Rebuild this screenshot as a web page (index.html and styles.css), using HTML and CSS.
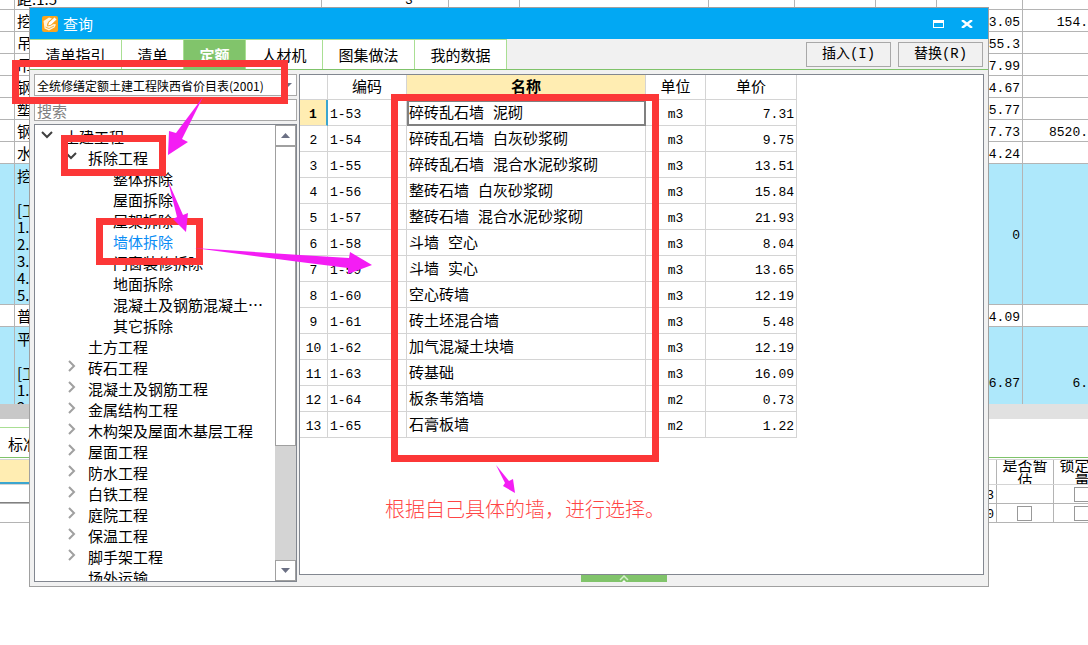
FILE: index.html
```html
<!DOCTYPE html>
<html lang="zh-CN">
<head>
<meta charset="utf-8">
<title>查询</title>
<link rel="stylesheet" href="styles.css">
</head>
<body>
<div class="desktop">
  <main class="sheet">
    <section class="budget">
      <div class="line"><span class="no"></span><span class="desc">距:1:5</span><span class="c1">3</span><span class="c2"></span><span class="c3"></span><span class="c4"></span><span class="c5"></span><span class="c6"></span><span class="c7"></span><span class="qty"></span><span class="sum"></span></div>
      <div class="line"><span class="no"></span><span class="item">挖</span><span class="qty">3.05</span><span class="sum">154.</span></div>
      <div class="line"><span class="no"></span><span class="item">吊</span><span class="qty">55.3</span><span class="sum"></span></div>
      <div class="line"><span class="no"></span><span class="item">吊</span><span class="qty">7.99</span><span class="sum"></span></div>
      <div class="line"><span class="no"></span><span class="item">钢</span><span class="qty">4.67</span><span class="sum"></span></div>
      <div class="line"><span class="no"></span><span class="item">塑</span><span class="qty">5.77</span><span class="sum"></span></div>
      <div class="line"><span class="no"></span><span class="item">钢</span><span class="qty">7.73</span><span class="sum">8520.</span></div>
      <div class="line"><span class="no"></span><span class="item">水</span><span class="qty">4.24</span><span class="sum"></span></div>
      <div class="line group tall"><span class="no"></span><span class="item">挖<br><br>[工<br>1.<br>2.<br>3.<br>4.<br>5.</span><span class="qty">0</span><span class="sum"></span></div>
      <div class="line"><span class="no"></span><span class="item">普</span><span class="qty">4.09</span><span class="sum"></span></div>
      <div class="line group last"><span class="no"></span><span class="item">平<br><br>[工<br>1.<br>2.</span><span class="qty">6.87</span><span class="sum">6.</span></div>
    </section>
    <div class="hscroll"><span class="hscroll-thumb"></span></div>
    <div class="subtabs"><span class="subtab">标准</span></div>
    <section class="detail">
      <div class="drow dhead"><span class="d1"></span><span class="d2"></span><span class="d3">是否暂估</span><span class="d4">锁定数量</span></div>
      <div class="drow first"><span class="d1"></span><span class="d2">3</span><span class="d3"></span><span class="d4"><input type="checkbox" aria-label="锁定数量"></span></div>
      <div class="drow"><span class="d1"></span><span class="d2">0</span><span class="d3"><input type="checkbox" aria-label="是否暂估"></span><span class="d4"><input type="checkbox" aria-label="锁定数量"></span></div>
    </section>
  </main>

  <section class="dialog" role="dialog" aria-labelledby="dlg-title">
    <header class="titlebar">
      <svg class="logo" width="16" height="16" viewBox="0 0 16 16" aria-hidden="true">
        <rect width="16" height="16" rx="2" fill="#fba51c"/>
        <path d="M1.500 5L7 1.500L10 2.500L6 6L5 9.500L8 9.500L12 8L14 8.500L12.500 11.500L7 14.500L2.500 12.500Z" fill="#fff4dc"/>
        <path d="M5.500 10L6.500 6.500L12.500 1L15 3.500L9 9.200Z" fill="#fff" stroke="#f49a12" stroke-width="0.800"/>
        <path d="M3.500 11L7 12.500L12 10" fill="none" stroke="#f8b64a" stroke-width="1"/>
      </svg>
      <h1 class="title" id="dlg-title">查询</h1>
      <button class="winbtn" aria-label="最大化"><svg width="11" height="8" viewBox="0 0 11 8"><path d="M0 0H11V8H0ZM1 3V7H10V3Z" fill="#fff" fill-rule="evenodd"/></svg></button>
      <button class="winbtn" aria-label="关闭"><svg width="12" height="8" viewBox="0 0 12 8"><path d="M1 0L11 8M11 0L1 8" stroke="#fff" stroke-width="2.400"/></svg></button>
    </header>
    <nav class="tabs">
      <button class="tab">清单指引</button><button class="tab short">清单</button><button class="tab short active">定额</button><button class="tab mid">人材机</button><button class="tab">图集做法</button><button class="tab">我的数据</button>
      <div class="actions"><button class="action">插入(I)</button><button class="action">替换(R)</button></div>
    </nav>
    <div class="body">
      <aside class="side">
        <div class="combo">
          <select class="select" aria-label="定额库"><option>全统修缮定额土建工程陕西省价目表(2001)</option></select>
          <svg class="caret" width="8" height="4" viewBox="0 0 8 4" aria-hidden="true"><path d="M0 0H8L4 4Z" fill="#6b7084"/></svg>
        </div>
        <input class="search" type="text" placeholder="搜索" aria-label="搜索">
        <div class="treebox">
          <ul class="tree">
            <li class="node l1 open"><svg class="chev" viewBox="0 0 12 8"><path d="M1 1L6 6L11 1"/></svg>土建工程</li>
            <li class="node l2 open"><svg class="chev" viewBox="0 0 12 8"><path d="M1 1L6 6L11 1"/></svg>拆除工程</li>
            <li class="node l3">整体拆除</li>
            <li class="node l3">屋面拆除</li>
            <li class="node l3">屋架拆除</li>
            <li class="node l3 picked">墙体拆除</li>
            <li class="node l3">门窗装修拆除</li>
            <li class="node l3">地面拆除</li>
            <li class="node l3">混凝土及钢筋混凝土…</li>
            <li class="node l3">其它拆除</li>
            <li class="node l2">土方工程</li>
            <li class="node l2"><svg class="chev" viewBox="0 0 8 12"><path d="M1 1L6 6L1 11"/></svg>砖石工程</li>
            <li class="node l2"><svg class="chev" viewBox="0 0 8 12"><path d="M1 1L6 6L1 11"/></svg>混凝土及钢筋工程</li>
            <li class="node l2"><svg class="chev" viewBox="0 0 8 12"><path d="M1 1L6 6L1 11"/></svg>金属结构工程</li>
            <li class="node l2"><svg class="chev" viewBox="0 0 8 12"><path d="M1 1L6 6L1 11"/></svg>木构架及屋面木基层工程</li>
            <li class="node l2"><svg class="chev" viewBox="0 0 8 12"><path d="M1 1L6 6L1 11"/></svg>屋面工程</li>
            <li class="node l2"><svg class="chev" viewBox="0 0 8 12"><path d="M1 1L6 6L1 11"/></svg>防水工程</li>
            <li class="node l2"><svg class="chev" viewBox="0 0 8 12"><path d="M1 1L6 6L1 11"/></svg>白铁工程</li>
            <li class="node l2"><svg class="chev" viewBox="0 0 8 12"><path d="M1 1L6 6L1 11"/></svg>庭院工程</li>
            <li class="node l2"><svg class="chev" viewBox="0 0 8 12"><path d="M1 1L6 6L1 11"/></svg>保温工程</li>
            <li class="node l2"><svg class="chev" viewBox="0 0 8 12"><path d="M1 1L6 6L1 11"/></svg>脚手架工程</li>
            <li class="node l2">场外运输</li>
          </ul>
          <div class="vscroll">
            <button class="arrow" aria-label="向上"><svg width="9" height="5" viewBox="0 0 9 5"><path d="M0 5L4.500 0L9 5Z" fill="#6b7084"/></svg></button>
            <span class="thumb"></span><span class="track"></span>
            <button class="arrow" aria-label="向下"><svg width="9" height="5" viewBox="0 0 9 5"><path d="M0 0L4.500 5L9 0Z" fill="#6b7084"/></svg></button>
          </div>
        </div>
      </aside>
      <div class="right">
        <div class="gridbox">
          <table class="grid">
            <colgroup><col class="k-no"><col class="k-code"><col class="k-name"><col class="k-unit"><col class="k-price"></colgroup>
            <thead><tr><th></th><th>编码</th><th class="hot">名称</th><th>单位</th><th>单价</th></tr></thead>
            <tbody>
              <tr class="current"><th>1</th><td>1-53</td><td class="name">碎砖乱石墙 泥砌</td><td class="unit">m3</td><td class="price">7.31</td></tr>
              <tr><th>2</th><td>1-54</td><td class="name">碎砖乱石墙 白灰砂浆砌</td><td class="unit">m3</td><td class="price">9.75</td></tr>
              <tr><th>3</th><td>1-55</td><td class="name">碎砖乱石墙 混合水泥砂浆砌</td><td class="unit">m3</td><td class="price">13.51</td></tr>
              <tr><th>4</th><td>1-56</td><td class="name">整砖石墙 白灰砂浆砌</td><td class="unit">m3</td><td class="price">15.84</td></tr>
              <tr><th>5</th><td>1-57</td><td class="name">整砖石墙 混合水泥砂浆砌</td><td class="unit">m3</td><td class="price">21.93</td></tr>
              <tr><th>6</th><td>1-58</td><td class="name">斗墙 空心</td><td class="unit">m3</td><td class="price">8.04</td></tr>
              <tr><th>7</th><td>1-59</td><td class="name">斗墙 实心</td><td class="unit">m3</td><td class="price">13.65</td></tr>
              <tr><th>8</th><td>1-60</td><td class="name">空心砖墙</td><td class="unit">m3</td><td class="price">12.19</td></tr>
              <tr><th>9</th><td>1-61</td><td class="name">砖土坯混合墙</td><td class="unit">m3</td><td class="price">5.48</td></tr>
              <tr><th>10</th><td>1-62</td><td class="name">加气混凝土块墙</td><td class="unit">m3</td><td class="price">12.19</td></tr>
              <tr><th>11</th><td>1-63</td><td class="name">砖基础</td><td class="unit">m3</td><td class="price">16.09</td></tr>
              <tr><th>12</th><td>1-64</td><td class="name">板条苇箔墙</td><td class="unit">m2</td><td class="price">0.73</td></tr>
              <tr><th>13</th><td>1-65</td><td class="name">石膏板墙</td><td class="unit">m2</td><td class="price">1.22</td></tr>
            </tbody>
          </table>
        </div>
        <button class="handle" aria-label="展开"><svg width="10" height="7" viewBox="0 0 10 7"><path d="M1 5L5 1L9 5" fill="none" stroke="#d5efcb" stroke-width="1.500"/><path d="M3 7L5 5L7 7Z" fill="#fff"/></svg></button>
      </div>
    </div>
  </section>

  <svg class="marks" aria-hidden="true">
    <g fill="none" stroke="#fc3737" stroke-width="7">
      <rect x="15.500" y="63.500" width="269" height="37"/>
      <rect x="64.500" y="138.500" width="98" height="34"/>
      <rect x="99.500" y="221.500" width="100" height="40"/>
      <rect x="394.500" y="97.500" width="261" height="361"/>
    </g>
    <g fill="#f41df4">
      <path d="M203 97L176 133L169 131L168 155L188 142L182 139Z"/>
      <path d="M168 181L177 217L173 219L186 232L188 213L183 215Z"/>
      <path d="M194 248L300 255L349 258L350 252L372 265L348 274L348 268L300 262Z"/>
      <path d="M496 465L505 483L503 486L515 493L513 479L509 481Z"/>
    </g>
  </svg>
  <p class="note">根据自己具体的墙，进行选择。</p>
</div>
</body>
</html>
```
FILE: styles.css
```css
* { box-sizing: border-box; }

body {
  margin: 0;
  background: #fff;
  color: #000;
  font: 400 15px/17px "Noto Sans CJK SC", sans-serif;
}

button, input, select { font: inherit; color: inherit; margin: 0; border-radius: 0; }

.desktop { position: relative; min-height: 100vh; overflow: hidden; }

/* budget sheet behind the dialog */
.budget { height: 404px; overflow: hidden; }
.line { display: flex; height: 22px; border-bottom: 1px solid #b4b4b4; align-items: stretch; }
.line:first-child { margin-top: -12px; }
.line > span {
  display: flex;
  align-items: center;
  border-right: 1px solid #b4b4b4;
  white-space: nowrap;
  overflow: hidden;
  flex: none;
}
.line .no { width: 15px; }
.line .desc { width: 307px; padding-left: 2px; }
.line .item { flex: 1; padding-left: 2px; }
.line .c1 { width: 127px; padding: 3px 0 0 83px; }
.line .c2 { width: 71px; }
.line .c3 { width: 189px; }
.line .c4 { width: 86px; }
.line .c5 { width: 81px; }
.line .c6 { width: 61px; }
.line .c7 { flex: 1; border-right: 0; }
.line .c1, .line .qty, .line .sum { font-family: "Liberation Mono", monospace; font-size: 13px; }
.line .qty, .line .sum { padding: 3px 2px 0 0; justify-content: flex-end; }
.line .qty { width: 86px; }
.line .sum { width: 65px; padding-right: 0; border-right: 0; }
.line.group { background: #aee8fb; }
.line.group .item { align-items: flex-start; padding-top: 3px; }
.line.tall { height: 141px; }
.line.last { height: 111px; }

.hscroll { display: flex; height: 15px; background: #e1e1e1; }
.hscroll-thumb { width: 50%; background: #c8c8c8; }
.subtabs { height: 39px; padding-top: 8px; border-bottom: 1px solid #7fc36a; display: flex; }
.subtab { width: 90px; border-top: 1px solid #a9df93; padding: 7px 0 0 8px; }

.detail { padding-top: 1px; }
.drow { display: flex; height: 19px; border-bottom: 1px solid #b4b4b4; overflow: hidden; }
.drow > span { display: flex; align-items: center; justify-content: center; flex: none; border-right: 1px solid #b4b4b4; }
.drow .d1 { width: 90px; border-right: 0; }
.drow .d2 { flex: 1; justify-content: flex-end; font-family: "Liberation Mono", monospace; font-size: 13px; padding: 3px 2px 0 0; }
.drow .d3 { width: 57px; padding-right: 2px; }
.drow .d4 { width: 57px; padding-right: 2px; margin-right: -23px; }
.dhead { height: 26px; line-height: 15px; border-top: 1px solid #d4d4d4; border-bottom-color: #d4d4d4; text-align: center; }
.dhead .d3, .dhead .d4 { padding: 0 5px; }
.dhead .d1 { background: #ffedb2; border-bottom: 2px solid #3ba5cf; }
.first .d1 { border-bottom: 1px solid #808080; }
.drow input { appearance: none; width: 15px; height: 15px; border: 1px solid #999; background: #fff; }

/* dialog */
.dialog {
  position: absolute;
  inset: 7px 99px 58px 29px;
  min-height: 580px;
  display: flex;
  flex-direction: column;
  background: #f1f1f1;
  border: 1px solid #a0a0a0;
}
.titlebar { display: flex; align-items: center; height: 31px; padding: 0 15px 0 12px; background: #02a8f3; color: #fff; flex: none; }
.title { flex: 1; margin: 0 0 0 5px; font-size: 15px; font-weight: 400; line-height: 17px; }
.winbtn { display: flex; padding: 0; margin-left: 17px; border: 0; background: none; }

.tabs { display: flex; height: 31px; flex: none; border-bottom: 1px solid #7fc36a; }
.tab {
  width: 92px;
  padding: 0;
  border: 0;
  border-top: 1px solid #a9df93;
  border-right: 1px solid #a9df93;
  background: #fff;
}
.tab.short { width: 62px; }
.tab.mid { width: 77px; }
.tab.active { background: #81c46b; color: #fff; font-weight: 700; }
.actions { display: flex; gap: 7px; margin-left: auto; padding: 3px 5px 2px 0; }
.action { width: 85px; padding: 0; border: 1px solid #a8a8a8; background: #f1f1f1; font-family: "Liberation Mono", "Noto Sans CJK SC", monospace; font-size: 14px; }

.body { flex: 1; min-height: 0; display: flex; gap: 2px; padding: 4px; }
.side { width: 263px; display: flex; flex-direction: column; gap: 3px; }
.combo { position: relative; flex: none; }
.select {
  appearance: none;
  display: block;
  width: 100%;
  height: 22px;
  padding: 0 2px;
  border: 1px solid #a8a8a8;
  background: #fff;
  font-size: 12px;
}
.caret { position: absolute; right: 5px; top: 9px; }
.search { width: 100%; height: 22px; flex: none; padding: 0 2px; border: 1px solid #a8a8a8; background: #fff; }
.search::placeholder { color: #808080; opacity: 1; }
.treebox { flex: 1; min-height: 0; display: flex; border: 1px solid #828790; background: #fff; }
.tree { flex: 1; min-width: 0; margin: 0; padding: 1px 0 0; list-style: none; overflow: hidden; }
.node { display: flex; align-items: center; height: 21px; white-space: nowrap; }
.l1 { padding-left: 29px; }
.l2 { padding-left: 53px; }
.l3 { padding-left: 78px; }
.chev { width: 8px; height: 12px; margin: 0 12px 3px -20px; fill: none; stroke: #a0a0a0; stroke-width: 2; }
.open .chev { width: 12px; height: 8px; margin: 0 11px 3px -23px; stroke: #404040; }
.picked { color: #0b8df5; }
.vscroll { width: 21px; display: flex; flex-direction: column; background: #d4d4d4; }
.arrow { height: 21px; padding: 0; display: flex; align-items: center; justify-content: center; border: 1px solid #a0a0a0; background: #fff; flex: none; }
.thumb { flex: 299; border: 1px solid #a0a0a0; background: #fff; }
.track { flex: 115; }

.right { flex: 1; min-width: 0; display: flex; flex-direction: column; align-items: center; }
.gridbox { flex: 1; width: 100%; min-height: 0; overflow: hidden; border: 1px solid #828790; background: #fff; }
.handle { width: 86px; height: 7px; margin-right: 36px; padding: 0; border: 0; background: #81c46b; display: flex; justify-content: center; flex: none; }

.grid { table-layout: fixed; width: 497px; border-collapse: separate; border-spacing: 0; font-family: "Liberation Mono", "Noto Sans CJK SC", monospace; font-size: 13px; }
.k-no { width: 28px; }
.k-code { width: 79px; }
.k-name { width: 239px; }
.k-unit { width: 60px; }
.k-price { width: 91px; }
.grid th, .grid td { height: 26px; padding: 4px 2px 0; border: 0 solid #d4d4d4; border-width: 0 1px 1px 0; font-weight: 400; text-align: left; white-space: nowrap; }
.grid th { text-align: center; }
.grid thead th { height: 25px; padding: 2px 0 0; font-size: 15px; }
.grid thead .hot { background: #ffedb2; font-weight: 700; }
.grid .name { font-size: 15px; }
.grid .unit { text-align: center; }
.grid .price { text-align: right; }
.grid .current th { background: #ffedb2; border-right: 2px solid #3ba5cf; font-weight: 700; }
.grid .current .name { outline: 2px solid #808080; outline-offset: -2px; }

/* marks over the window */
.marks { position: absolute; inset: 0; width: 100%; height: 100%; pointer-events: none; }
.note { position: absolute; left: 385px; top: 497px; margin: 0; font-size: 20px; font-weight: 300; line-height: 24px; color: #ff4545; white-space: nowrap; }
```
